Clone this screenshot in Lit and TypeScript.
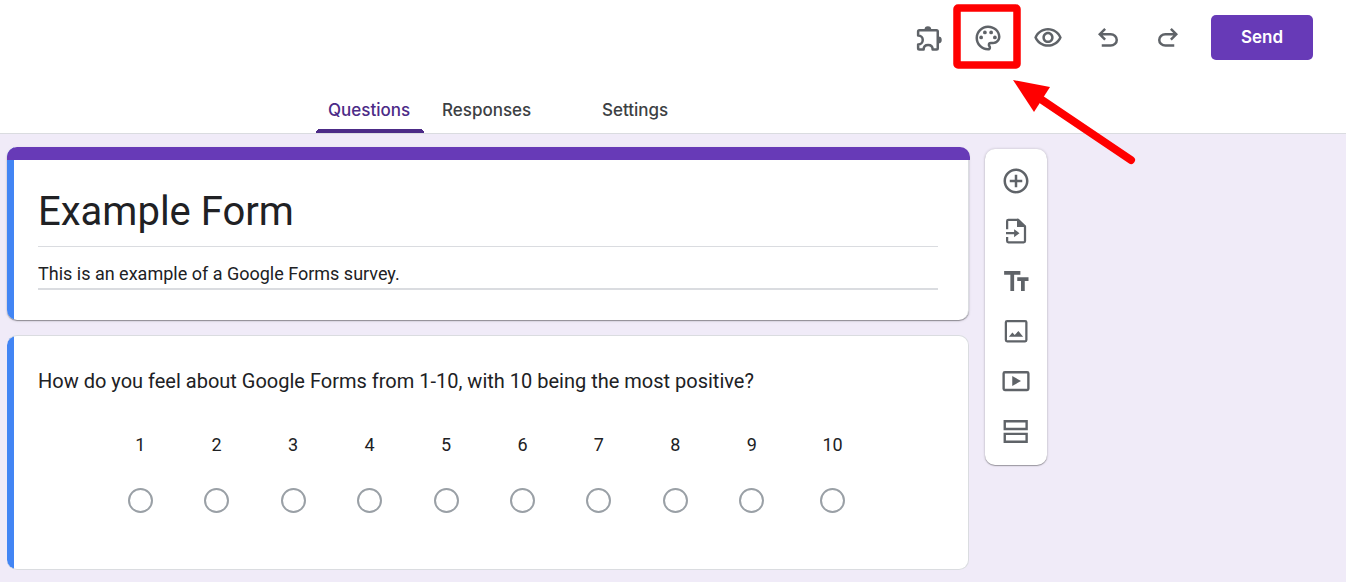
import { LitElement, html, css, svg } from "lit";
import { customElement, property, state } from "lit/decorators.js";

const icons = {
  addons: svg`<g transform="translate(0.8 0.2)"><path fill="none" stroke="currentColor" stroke-width="2" stroke-linejoin="round" d="M4.3 5.5H18a1 1 0 0 1 1 1V20a1 1 0 0 1-1 1H14.9C14.9 18.6 13.3 17.4 11.3 17.4S7.7 18.6 7.7 21H4.3a1 1 0 0 1-1-1V17C5.6 17 7 15.4 7 13.4S5.6 9.8 3.3 9.8V6.500a1 1 0 0 1 1-1z"/><path d="M8.4 5a2.7 2.7 0 0 1 5.4 0zM19.5 10.6a2.7 2.7 0 0 1 0 5.4z"/></g>`,
  palette: svg`<path d="M12 22C6.49 22 2 17.51 2 12S6.49 2 12 2s10 4.04 10 9c0 3.31-2.69 6-6 6h-1.77c-.28 0-.5.22-.5.5 0 .12.05.23.13.33.41.47.64 1.06.64 1.67A2.5 2.5 0 0 1 12 22zm0-18c-4.41 0-8 3.59-8 8s3.59 8 8 8c.28 0 .5-.22.5-.5a.54.54 0 0 0-.14-.35c-.41-.46-.63-1.05-.63-1.65a2.5 2.5 0 0 1 2.500-2.500H16c2.210 0 4-1.790 4-4 0-3.860-3.590-7-8-7z"/><circle cx="6.5" cy="11.5" r="1.5"/><circle cx="9.5" cy="7.5" r="1.5"/><circle cx="14.5" cy="7.5" r="1.5"/><circle cx="17.5" cy="11.5" r="1.5"/>`,
  preview: svg`<path d="M12 6c3.79 0 7.17 2.13 8.82 5.5C19.17 14.87 15.79 17 12 17s-7.17-2.13-8.82-5.5C4.83 8.13 8.21 6 12 6m0-2C7 4 2.73 7.11 1 11.5 2.73 15.89 7 19 12 19s9.27-3.11 11-7.5C21.27 7.11 17 4 12 4zm0 5c1.38 0 2.5 1.12 2.5 2.5S13.38 14 12 14s-2.5-1.12-2.5-2.5S10.62 9 12 9m0-2c-2.48 0-4.5 2.02-4.5 4.5S9.52 16 12 16s4.5-2.02 4.5-4.5S14.48 7 12 7z"/>`,
  undo: svg`<path d="M7 19v-2h7.1q1.575 0 2.738-1T18 13.5 16.838 11 14.1 10H7.8l2.6 2.6L9 14 4 9l5-5 1.4 1.4L7.8 8h6.3q2.425 0 4.163 1.575T20 13.5t-1.737 3.925T14.1 19z"/>`,
  redo: svg`<path d="M9.9 19q-2.425 0-4.163-1.575T4 13.5t1.737-3.925T9.9 8h6.3l-2.6-2.6L15 4l5 5-5 5-1.4-1.4 2.6-2.6H9.9q-1.575 0-2.738 1T6 13.5 7.162 16 9.9 17H17v2z"/>`,
  add: svg`<path d="M13 7h-2v4H7v2h4v4h2v-4h4v-2h-4V7zm-1-5C6.48 2 2 6.48 2 12s4.48 10 10 10 10-4.48 10-10S17.52 2 12 2zm0 18c-4.41 0-8-3.59-8-8s3.59-8 8-8 8 3.59 8 8-3.59 8-8 8z"/>`,
  importDoc: svg`<path fill="none" stroke="currentColor" stroke-width="1.8" stroke-linejoin="round" d="M4.9 10.5V4a1 1 0 0 1 1-1H13.5L19.2 8.5V20a1 1 0 0 1-1 1H5.9a1 1 0 0 1-1-1V16.7"/><path d="M12.8 2.2h1.2L20 8v.7h-7.2zM4 12.8h6.5v-2.3l4.3 3.2-4.3 3.2v-2.3H4z"/>`,
  text: svg`<path d="M2.5 4v3h5v13h3V7h5V4zM22 9h-9v3h3v8h3v-8h3z"/>`,
  image: svg`<rect x="3.9" y="4" width="16.4" height="16.2" rx="1" fill="none" stroke="currentColor" stroke-width="1.8"/><path d="M6.3 16.6 9.1 13.2 11 15.2 13.9 12 17.7 16.6z"/>`,
  video: svg`<rect x="2.1" y="5" width="19.8" height="14.2" rx="1" fill="none" stroke="currentColor" stroke-width="1.9"/><path d="M9 8v8l7-4z"/>`,
  section: svg`<path fill="none" stroke="currentColor" stroke-width="1.9" d="M3 4.2H20.5V10.4H3zM3 14.3H20.5V20.6H3z"/>`,
};

type IconName = keyof typeof icons;

@customElement("icon-button")
class IconButton extends LitElement {
  @property() icon: IconName = "add";
  @property() label = "";

  static styles = css`
    :host {
      display: block;
    }
    .button {
      display: grid;
      place-items: center;
      width: 100%;
      height: 100%;
      padding: 0;
      border: 0;
      background: none;
      color: #5f6368;
      cursor: pointer;
    }
    .icon {
      width: 30px;
      height: 30px;
      fill: currentColor;
    }
  `;

  render() {
    return html`<button class="button" type="button" aria-label=${this.label}>
      <svg class="icon" viewBox="0 0 24 24" aria-hidden="true">${icons[this.icon]}</svg>
    </button>`;
  }
}

@customElement("form-header")
class FormHeader extends LitElement {
  @state() private active = "Questions";

  static styles = css`
    :host {
      display: block;
      background: #fff;
      border-bottom: 1px solid #dadce0;
    }
    .actions {
      display: flex;
      justify-content: flex-end;
      align-items: center;
      height: 75px;
      padding-right: 33px;
    }
    .action {
      width: 60px;
      height: 60px;
    }
    .marked {
      position: relative;
    }
    .callout {
      position: absolute;
      left: -8px;
      top: -8px;
      width: 190px;
      height: 170px;
      pointer-events: none;
      z-index: 2;
    }
    .send {
      width: 102px;
      height: 45px;
      margin-left: 13px;
      padding-bottom: 2px;
      border: 0;
      border-radius: 5px;
      background: #673ab7;
      color: #fff;
      font: 600 17px/24px Inter, "Open Sans", sans-serif;
      cursor: pointer;
    }
    .tabs {
      display: grid;
      grid-template-columns: 108px 154px 90px;
      gap: 6px;
      padding: 14px 0 0 316px;
    }
    .tab {
      height: 44px;
      padding: 0 0 2px 12px;
      border: 0;
      border-radius: 4px 4px 0 0;
      background: none;
      color: #3c4043;
      font: 500 17px/24px Inter, "Open Sans", sans-serif;
      text-align: left;
      cursor: pointer;
    }
    .tab.active {
      color: #4c2b87;
      background:
        radial-gradient(circle at 4px 4px, #4c2b87 4px, transparent 4px) left bottom / 4px 4px no-repeat,
        radial-gradient(circle at 0 4px, #4c2b87 4px, transparent 4px) right bottom / 4px 4px no-repeat,
        linear-gradient(#4c2b87, #4c2b87) bottom / calc(100% - 8px) 4px no-repeat;
    }
  `;

  render() {
    return html`
      <div class="actions">
        <icon-button class="action" icon="addons" label="Add-ons"></icon-button>
        <div class="marked">
          <icon-button class="action" icon="palette" label="Customize theme"></icon-button>
          <svg class="callout" viewBox="0 0 190 170" aria-hidden="true">
            <rect x="7" y="8" width="60" height="57" rx="1" fill="none" stroke="#f00" stroke-width="7.5" stroke-linejoin="round" />
            <path d="M63 80 100 87 84 112z" fill="#f00" />
            <path d="M92 100 181 160" stroke="#f00" stroke-width="8" stroke-linecap="round" />
          </svg>
        </div>
        <icon-button class="action" icon="preview" label="Preview"></icon-button>
        <icon-button class="action" icon="undo" label="Undo"></icon-button>
        <icon-button class="action" icon="redo" label="Redo"></icon-button>
        <button class="send" type="button">Send</button>
      </div>
      <div class="tabs" role="tablist">
        ${["Questions", "Responses", "Settings"].map(
          (name) => html`<button
            class="tab ${name === this.active ? "active" : ""}"
            type="button"
            role="tab"
            aria-selected=${name === this.active}
            @click=${() => (this.active = name)}
          >${name}</button>`
        )}
      </div>
    `;
  }
}

@customElement("app-root")
class AppRoot extends LitElement {
  static styles = css`
    :host {
      display: block;
      min-height: 100vh;
      background: #f0ebf8;
      color: #202124;
      font-family: Roboto, sans-serif;
    }
    .page {
      display: flex;
      align-items: flex-start;
      gap: 16px;
      padding: 13px 7px 12px;
    }
    .cards {
      flex: 1;
      max-width: 962px;
      display: grid;
      gap: 15px;
    }
    .card {
      box-sizing: border-box;
      border: 1px solid #dadce0;
      border-left: 0;
      border-radius: 10px;
      background: linear-gradient(#4285f4, #4285f4) left / 7px 100% no-repeat #fff;
    }
    .intro {
      border-top: 0;
      border-bottom: 0;
      box-shadow: 0 1px 1px rgba(0, 0, 0, 0.35), 0 1px 3px rgba(0, 0, 0, 0.12);
    }
    .banner {
      height: 13px;
      margin-right: -2px;
      border-radius: 10px 10px 0 0;
      background: #673ab7;
    }
    .fields {
      display: grid;
      padding: 20px 30px 30px 31px;
    }
    .field {
      box-sizing: border-box;
      min-width: 0;
      padding: 0;
      border: 0;
      border-bottom: 1px solid #dadce0;
      outline: 0;
      background: none;
      color: inherit;
      font-family: inherit;
    }
    .title {
      height: 67px;
      padding-bottom: 4px;
      font-size: 40px;
    }
    .description {
      height: 43px;
      padding-top: 12px;
      border-bottom-width: 2px;
      font-size: 18px;
    }
    .question {
      padding: 31px 30px 52px 31px;
      min-width: 0;
    }
    .prompt {
      font-size: 20px;
      line-height: 28px;
    }
    .scale {
      display: grid;
      grid-template-columns: repeat(9, 9fr) 10fr;
      margin: 38px 63px 4px 64px;
    }
    .option {
      display: grid;
      justify-items: center;
      gap: 31px;
      font-size: 18px;
      line-height: 24px;
    }
    .radio {
      appearance: none;
      box-sizing: border-box;
      width: 25px;
      height: 25px;
      margin: 0;
      border: 2px solid #9aa0a6;
      border-radius: 50%;
    }
    .radio:checked {
      border-color: #673ab7;
      background: radial-gradient(#673ab7 50%, transparent 55%);
    }
    .tools {
      flex: none;
      width: 62px;
      margin-top: 2px;
      padding: 7px 0 9px;
      border-radius: 10px;
      background: #fff;
      box-shadow: 0 1px 1px rgba(0, 0, 0, 0.3), 0 0 3px rgba(0, 0, 0, 0.2);
    }
    .tool {
      height: 50px;
    }
  `;

  private tools: [IconName, string][] = [
    ["add", "Add question"],
    ["importDoc", "Import questions"],
    ["text", "Add title and description"],
    ["image", "Add image"],
    ["video", "Add video"],
    ["section", "Add section"],
  ];

  render() {
    return html`
      <form-header></form-header>
      <main class="page">
        <div class="cards">
          <section class="card intro">
            <div class="banner"></div>
            <div class="fields">
              <input class="field title" aria-label="Form title" value="Example Form" />
              <input class="field description" aria-label="Form description" value="This is an example of a Google Forms survey." />
            </div>
          </section>
          <section class="card question" role="radiogroup" aria-labelledby="prompt">
            <div class="prompt" id="prompt">How do you feel about Google Forms from 1-10, with 10 being the most positive?</div>
            <div class="scale">
              ${Array.from({ length: 10 }, (_, i) => html`<label class="option">
                <span>${i + 1}</span>
                <input class="radio" type="radio" name="rating" value=${i + 1} />
              </label>`)}
            </div>
          </section>
        </div>
        <aside class="tools">
          ${this.tools.map(([icon, label]) => html`<icon-button class="tool" icon=${icon} label=${label}></icon-button>`)}
        </aside>
      </main>
    `;
  }
}
